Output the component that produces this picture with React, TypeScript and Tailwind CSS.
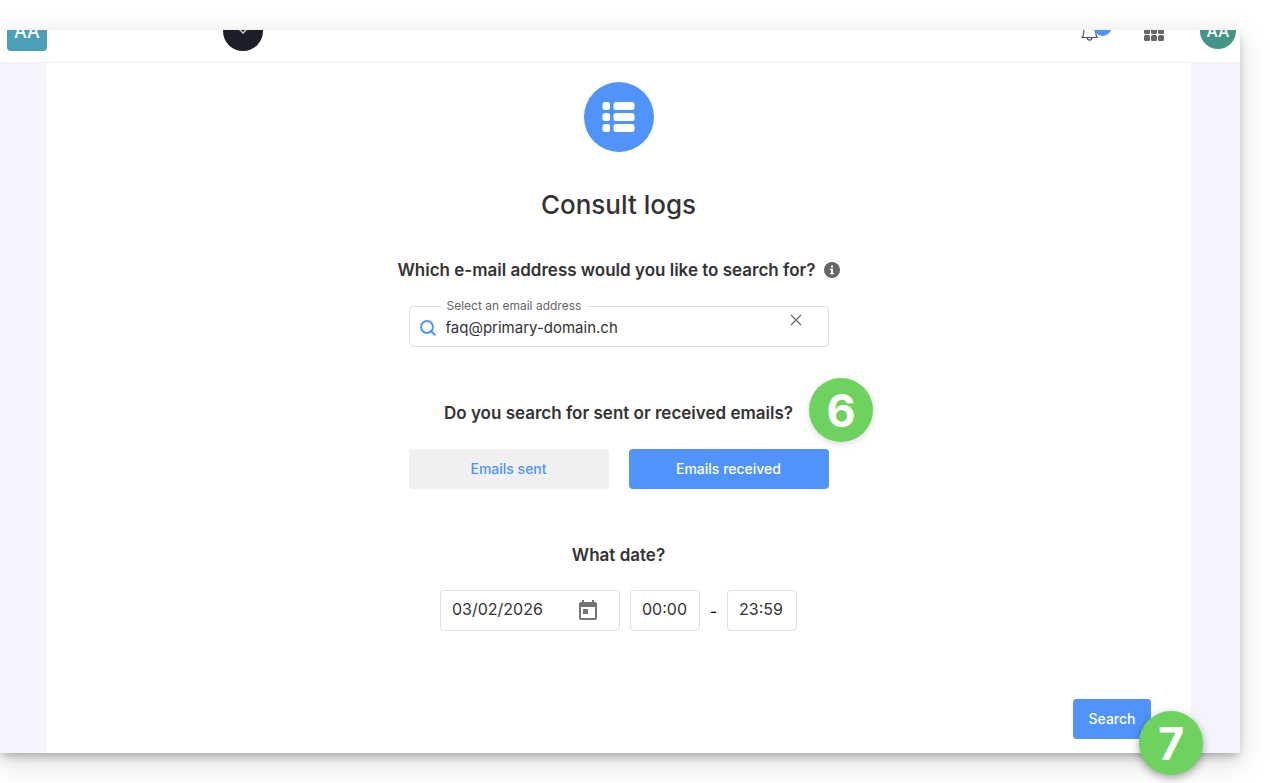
import { useState } from "react";
import type { ReactNode } from "react";

function Step({ children, className }: { children: ReactNode; className: string }) {
  return (
    <span
      className={`absolute flex size-16 items-center justify-center rounded-full bg-[#6dd35e] text-[45px] leading-none font-bold text-white ${className}`}
    >
      {children}
    </span>
  );
}

function Header() {
  return (
    <div className="overflow-hidden bg-white">
      <header className="-mt-[31px] flex h-16 items-center border-b border-[#f1f1f1] pr-1 pl-[7px] text-white">
        <a
          href="#home"
          className="flex size-10 items-center justify-center rounded bg-[#4b9fb9] pt-0.5 text-lg font-medium"
        >
          AA
        </a>
        <button
          type="button"
          aria-label="Products"
          className="ml-44 flex size-10 items-center justify-center rounded-full bg-[#1c1f29]"
        >
          <svg viewBox="0 0 12 12" className="size-3" fill="none" stroke="#d6d6c8" strokeWidth="1.3" aria-hidden="true">
            <path d="M2 4 6 0l4 4-4 4z" />
          </svg>
        </button>
        <button type="button" aria-label="Notifications" className="relative mr-[33px] ml-auto">
          <svg viewBox="0 0 30 22" className="h-[22px] w-[30px]" aria-hidden="true">
            <path
              d="M.8 17.500c1.300-1.200 2-3 2-5V9a6 6 0 0 1 12 0v3.500c0 2 .3 3.800 1.500 5z M6.300 17.500a2.300 2.600 0 0 0 4.600 0"
              fill="none"
              stroke="#555"
              strokeWidth="1.2"
              strokeLinejoin="round"
            />
            <circle cx="21.500" cy="7" r="9" fill="#4f93fb" />
          </svg>
        </button>
        <button type="button" aria-label="Applications">
          <svg viewBox="0 0 20 20" className="size-5" fill="#666" aria-hidden="true">
            {[0, 7, 14].map((y) =>
              [0, 7, 14].map((x) => <rect key={`${x}-${y}`} x={x} y={y} width="6" height="6" rx="1.5" />),
            )}
          </svg>
        </button>
        <button
          type="button"
          aria-label="Account AA"
          className="ml-9 flex size-9 items-center justify-center rounded-full bg-[#459488] text-base font-medium"
        >
          AA
        </button>
      </header>
    </div>
  );
}

const field = "h-[41px] rounded border border-[#e0e0e0] bg-white text-[#333] outline-none";
const heading = "text-[17px] leading-6 font-semibold";

export default function App() {
  const [email, setEmail] = useState("faq@primary-domain.ch");
  const [date, setDate] = useState("03/02/2026");
  const [from, setFrom] = useState("00:00");
  const [to, setTo] = useState("23:59");
  const [received, setReceived] = useState(true);
  const active = "bg-[#4f93fb] text-white";
  const idle = "bg-[#f0f0f0] text-[#4f93fb]";

  return (
    <div className="flex min-h-screen flex-col overflow-hidden bg-white py-[30px] pr-[30px] font-['Inter',sans-serif] text-[#333]">
      <div className="flex grow flex-col bg-[#f4f4fe] shadow-[0_5px_8px_-2px_rgba(0,0,0,0.25),0_8px_26px_rgba(0,0,0,0.17)]">
        <Header />
        <main className="mr-[49px] ml-[46px] flex grow flex-col items-center bg-white pt-[19px] pb-3.5">
          <div className="flex size-[70px] items-center justify-center rounded-full bg-[#4f93fb]">
            <svg viewBox="0 0 33 30" className="h-[30px] w-[33px]" fill="#fff" aria-hidden="true">
              {[0, 11, 22].map((y) => (
                <g key={y}>
                  <rect x="0.500" y={y} width="7.500" height="8" rx="2.500" />
                  <rect x="11.500" y={y} width="21" height="8" rx="2.500" />
                </g>
              ))}
            </svg>
          </div>
          <h1 className="mt-[37px] text-[26px] leading-8 font-medium">Consult logs</h1>

          <div className="mt-[37px] flex items-center gap-2">
            <h2 className={heading}>Which e-mail address would you like to search for?</h2>
            <svg viewBox="0 0 16 16" className="size-4" aria-label="Information" role="img">
              <circle cx="8" cy="8" r="8" fill="#666" />
              <path d="M7 3.500h2v2H7zM6 6.700h3v4.300h1v1.300H6V11h1V8H6z" fill="#fff" />
            </svg>
          </div>
          <div className="relative mt-6 w-[420px] max-w-full">
            <label
              htmlFor="email"
              className="absolute -top-2 left-8 bg-white px-1.5 text-xs leading-4 text-[#666]"
            >
              Select an email address
            </label>
            <svg
              viewBox="0 0 16 16"
              className="absolute top-3.5 left-[11px] size-4"
              fill="none"
              stroke="#4f93fb"
              strokeWidth="2"
              strokeLinecap="round"
              aria-hidden="true"
            >
              <circle cx="7" cy="7" r="5.900" />
              <path d="m11.300 11.300 3.500 3.500" />
            </svg>
            <input
              id="email"
              value={email}
              onChange={(e) => setEmail(e.target.value)}
              className={`${field} w-full pt-0.5 pr-12 pl-9 text-[15px]`}
            />
            <button
              type="button"
              aria-label="Clear"
              onClick={() => setEmail("")}
              className="absolute top-2 right-[27px]"
            >
              <svg viewBox="0 0 12 12" className="size-3" stroke="#666" strokeWidth="1.200" aria-hidden="true">
                <path d="m1 1 10 10M11 1 1 11" />
              </svg>
            </button>
          </div>

          <div className="relative mt-[54px]">
            <h2 className={heading}>Do you search for sent or received emails?</h2>
            <Step className="-top-[23px] left-full ml-4 shadow-[0_2px_6px_rgba(0,0,0,0.15)]">6</Step>
          </div>
          <div className="mt-6 flex gap-5 text-sm font-medium">
            <button
              type="button"
              aria-pressed={!received}
              onClick={() => setReceived(false)}
              className={`h-10 w-[200px] rounded ${received ? idle : active}`}
            >
              Emails sent
            </button>
            <button
              type="button"
              aria-pressed={received}
              onClick={() => setReceived(true)}
              className={`h-10 w-[200px] rounded ${received ? active : idle}`}
            >
              Emails received
            </button>
          </div>

          <h2 className={`${heading} mt-[54px]`}>What date?</h2>
          <div className="mt-[23px] flex items-center">
            <div className="relative">
              <input
                aria-label="Date"
                value={date}
                onChange={(e) => setDate(e.target.value)}
                className={`${field} w-[180px] pr-12 pb-1 pl-[11px] text-base`}
              />
              <button type="button" aria-label="Open calendar" className="absolute top-2.5 right-[23px]">
                <svg viewBox="0 0 18 20" className="h-5 w-[18px]" fill="#757575" aria-hidden="true">
                  <path
                    fillRule="evenodd"
                    d="M3 0h2v2h8V0h2v2h1a2 2 0 0 1 2 2v14a2 2 0 0 1-2 2H2a2 2 0 0 1-2-2V4a2 2 0 0 1 2-2h1zM2 7v11h14V7z"
                  />
                  <path d="M4 9h5v5H4z" />
                </svg>
              </button>
            </div>
            <input
              aria-label="From"
              value={from}
              onChange={(e) => setFrom(e.target.value)}
              className={`${field} ml-2.5 w-[70px] pb-1 pl-[11px] text-base`}
            />
            <span className="w-[27px] text-center text-base text-black">-</span>
            <input
              aria-label="To"
              value={to}
              onChange={(e) => setTo(e.target.value)}
              className={`${field} w-[70px] pb-1 pl-[11px] text-base`}
            />
          </div>

          <div className="relative mt-auto mr-10 self-end">
            <button type="button" className="h-10 w-[78px] rounded bg-[#4f93fb] text-sm font-medium text-white">
              Search
            </button>
            <Step className="top-3 left-[66px] shadow-[0_3px_8px_rgba(0,0,0,0.35)]">7</Step>
          </div>
        </main>
      </div>
    </div>
  );
}
